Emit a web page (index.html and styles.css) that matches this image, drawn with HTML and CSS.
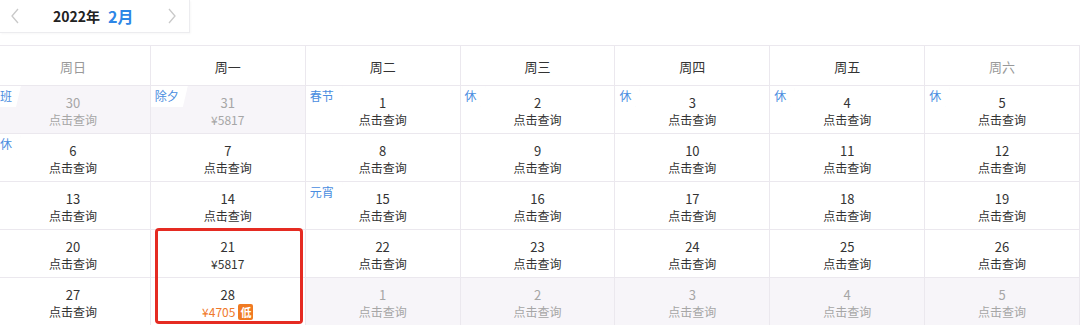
FILE: index.html
```html
<!DOCTYPE html>
<html lang="zh">
<head>
<meta charset="utf-8">
<link rel="stylesheet" href="styles.css">
</head>
<body>
<div class="nav">
  <span class="chev chev-l"><svg width="8" height="16" viewBox="0 0 8 16"><polyline points="7,1 1,8 7,15" fill="none" stroke="#c9c9c9" stroke-width="1.3"/></svg></span>
  <span class="year">2022年</span>
  <span class="month">2月</span>
  <span class="chev chev-r"><svg width="8" height="16" viewBox="0 0 8 16"><polyline points="1,1 7,8 1,15" fill="none" stroke="#c9c9c9" stroke-width="1.3"/></svg></span>
</div>
<div class="cal">
  <div class="head">
    <div class="hc wkend">周日</div>
    <div class="hc">周一</div>
    <div class="hc">周二</div>
    <div class="hc">周三</div>
    <div class="hc">周四</div>
    <div class="hc">周五</div>
    <div class="hc wkend">周六</div>
  </div>
  <div class="body">
    <div class="c other"><span class="tag">班</span><span class="d">30</span><span class="s">点击查询</span></div>
    <div class="c other"><span class="tag">除夕</span><span class="d">31</span><span class="s">¥5817</span></div>
    <div class="c"><span class="tag">春节</span><span class="d">1</span><span class="s">点击查询</span></div>
    <div class="c"><span class="tag">休</span><span class="d">2</span><span class="s">点击查询</span></div>
    <div class="c"><span class="tag">休</span><span class="d">3</span><span class="s">点击查询</span></div>
    <div class="c"><span class="tag">休</span><span class="d">4</span><span class="s">点击查询</span></div>
    <div class="c"><span class="tag">休</span><span class="d">5</span><span class="s">点击查询</span></div>

    <div class="c"><span class="tag">休</span><span class="d">6</span><span class="s">点击查询</span></div>
    <div class="c"><span class="d">7</span><span class="s">点击查询</span></div>
    <div class="c"><span class="d">8</span><span class="s">点击查询</span></div>
    <div class="c"><span class="d">9</span><span class="s">点击查询</span></div>
    <div class="c"><span class="d">10</span><span class="s">点击查询</span></div>
    <div class="c"><span class="d">11</span><span class="s">点击查询</span></div>
    <div class="c"><span class="d">12</span><span class="s">点击查询</span></div>

    <div class="c"><span class="d">13</span><span class="s">点击查询</span></div>
    <div class="c"><span class="d">14</span><span class="s">点击查询</span></div>
    <div class="c"><span class="tag">元宵</span><span class="d">15</span><span class="s">点击查询</span></div>
    <div class="c"><span class="d">16</span><span class="s">点击查询</span></div>
    <div class="c"><span class="d">17</span><span class="s">点击查询</span></div>
    <div class="c"><span class="d">18</span><span class="s">点击查询</span></div>
    <div class="c"><span class="d">19</span><span class="s">点击查询</span></div>

    <div class="c"><span class="d">20</span><span class="s">点击查询</span></div>
    <div class="c sel-top"><span class="d">21</span><span class="s">¥5817</span></div>
    <div class="c"><span class="d">22</span><span class="s">点击查询</span></div>
    <div class="c"><span class="d">23</span><span class="s">点击查询</span></div>
    <div class="c"><span class="d">24</span><span class="s">点击查询</span></div>
    <div class="c"><span class="d">25</span><span class="s">点击查询</span></div>
    <div class="c"><span class="d">26</span><span class="s">点击查询</span></div>

    <div class="c"><span class="d">27</span><span class="s">点击查询</span></div>
    <div class="c sel-bot"><span class="d">28</span><span class="s low">¥4705<span class="badge">低</span></span></div>
    <div class="c other"><span class="d">1</span><span class="s">点击查询</span></div>
    <div class="c other"><span class="d">2</span><span class="s">点击查询</span></div>
    <div class="c other"><span class="d">3</span><span class="s">点击查询</span></div>
    <div class="c other"><span class="d">4</span><span class="s">点击查询</span></div>
    <div class="c other"><span class="d">5</span><span class="s">点击查询</span></div>
  </div>
</div>
</body>
</html>
```

FILE: styles.css
```css
* { box-sizing: border-box; }
html, body {
  margin: 0;
  padding: 0;
  background: #fff;
  overflow: hidden;
}
body {
  width: 1080px;
  height: 325px;
  font-family: "Noto Sans CJK SC", "Noto Sans", sans-serif;
  color: #333;
}
.nav {
  width: 190px;
  height: 33px;
  display: flex;
  align-items: center;
  border-right: 1px solid #ececef;
  border-bottom: 1px solid #ececef;
  box-shadow: 1px 1px 2px rgba(0,0,0,0.03);
}
.chev { display: flex; align-items: center; }
.chev-l { margin-left: 11px; }
.year {
  margin-left: 34px;
  font-size: 14px;
  font-weight: 700;
  color: #222;
}
.month {
  margin-left: 8px;
  font-size: 16px;
  font-weight: 700;
  color: #2e86e6;
}
.chev-r { margin-left: 34px; }

.cal {
  margin-top: 12px;
  margin-left: -4px;
  width: 1084px;
  border-top: 1px solid #ebe8ee;
}
.head, .body {
  display: grid;
  grid-template-columns: repeat(7, 1fr);
}
.hc {
  height: 40px;
  display: flex;
  align-items: center;
  justify-content: center;
  padding-top: 2px;
  font-size: 13px;
  color: #333;
  border-right: 1px solid #ebe8ee;
  border-bottom: 1px solid #ebe8ee;
}
.hc.wkend { color: #999; }
.c {
  position: relative;
  height: 48px;
  display: flex;
  flex-direction: column;
  align-items: center;
  padding-top: 8px;
  border-right: 1px solid #ebe8ee;
  border-bottom: 1px solid #ebe8ee;
  background: #fff;
}
.c .d {
  font-size: 13px;
  line-height: 17px;
  color: #333;
}
.c .s {
  display: flex;
  align-items: center;
  font-size: 12px;
  line-height: 17px;
  color: #333;
}
.c.other { background: #f7f5f9; }
.c.other .d, .c.other .s { color: #a6a6a6; }
.tag {
  position: absolute;
  top: 0;
  left: 0;
  padding: 2px 9px 3px 4px;
  font-size: 12px;
  line-height: 16px;
  color: #4a8de0;
  background: #fff;
  clip-path: polygon(0 0, 100% 0, calc(100% - 5px) 100%, 0 100%);
  box-shadow: 1px 1px 3px rgba(0,0,0,0.05);
}
.c .s.low { color: #f0782a; }
.badge {
  margin-left: 3px;
  width: 15px;
  height: 16px;
  display: inline-flex;
  align-items: center;
  justify-content: center;
  font-size: 11px;
  line-height: 16px;
  font-weight: 700;
  color: #fff;
  background: #f07a22;
  border-radius: 2px;
}
.sel-top::after, .sel-bot::after {
  content: "";
  position: absolute;
  left: 4px;
  right: 2px;
  border: 3px solid #e52b22;
  pointer-events: none;
}
.sel-top::after {
  top: -2px;
  bottom: -1px;
  border-bottom: none;
  border-radius: 4px 4px 0 0;
}
.sel-bot::after {
  top: -1px;
  bottom: 1px;
  border-top: none;
  border-radius: 0 0 4px 4px;
}
```
